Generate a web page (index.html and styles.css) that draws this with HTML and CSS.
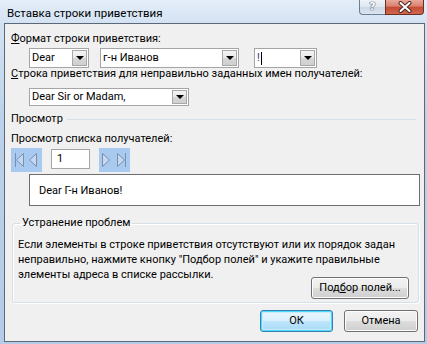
FILE: index.html
```html
<!DOCTYPE html>
<html lang="ru">
<head>
<meta charset="utf-8">
<link rel="stylesheet" href="styles.css">
</head>
<body>
<div class="window">
  <div class="titlebar">
    <span class="title">Вставка строки приветствия</span>
    <div class="caps">
      <div class="cap-help">?</div>
      <div class="cap-close">
        <svg width="16" height="12" viewBox="0 0 16 12"><path d="M3.5 2 L12.5 10 M12.5 2 L3.5 10" stroke="#4a2a24" stroke-width="4" stroke-linecap="round"/><path d="M3.5 2 L12.5 10 M12.5 2 L3.5 10" stroke="#fff" stroke-width="2" stroke-linecap="round"/></svg>
      </div>
    </div>
  </div>
  <div class="client">
    <div class="label lbl1"><u>Ф</u>ормат строки приветствия:</div>
    <div class="row row1">
      <div class="combo w-a"><span class="val">Dear</span><span class="drop"></span></div>
      <div class="combo w-b"><span class="val">г-н Иванов</span><span class="drop"></span></div>
      <div class="combo w-c"><span class="val">!<i class="caret"></i></span><span class="drop"></span></div>
    </div>
    <div class="label lbl2"><u>С</u>трока приветствия для неправильно заданных имен получателей:</div>
    <div class="row row2">
      <div class="combo w-d"><span class="val">Dear Sir or Madam,</span><span class="drop"></span></div>
    </div>
    <div class="section">
      <span class="section-title">Просмотр</span>
      <span class="section-line"></span>
    </div>
    <div class="label lbl3">Просмотр списка получателей:</div>
    <div class="nav">
      <div class="navbox">
        <svg width="31" height="24" viewBox="0 0 31 24"><path d="M4.5 5 V19" stroke="#7d8fa5" stroke-width="1"/><path d="M12.5 5.5 L5.5 12 L12.5 18.5 Z" fill="#c2d8f4" stroke="#7d8fa5" stroke-width="1"/><path d="M25.5 5.5 L18.5 12 L25.5 18.5 Z" fill="#c2d8f4" stroke="#7d8fa5" stroke-width="1"/></svg>
      </div>
      <div class="navinput">1</div>
      <div class="navbox">
        <svg width="31" height="24" viewBox="0 0 31 24"><path d="M3.5 5.5 L10.5 12 L3.5 18.5 Z" fill="#c2d8f4" stroke="#7d8fa5" stroke-width="1"/><path d="M18.5 5.5 L25.5 12 L18.5 18.5 Z" fill="#c2d8f4" stroke="#7d8fa5" stroke-width="1"/><path d="M26.5 5 V19" stroke="#7d8fa5" stroke-width="1"/></svg>
      </div>
    </div>
    <div class="preview">Dear Г-н Иванов!</div>
    <fieldset class="group">
      <legend>Устранение проблем</legend>
      <p class="help">Если элементы в строке приветствия отсутствуют или их порядок задан неправильно, нажмите кнопку "Подбор полей" и укажите правильные элементы адреса в списке рассылки.</p>
      <div class="group-actions">
        <button class="btn btn-match">Под<u>б</u>ор полей...</button>
      </div>
    </fieldset>
    <div class="footer">
      <button class="btn btn-ok">ОК</button>
      <button class="btn btn-cancel">Отмена</button>
    </div>
  </div>
</div>
</body>
</html>
```

FILE: styles.css
```css
* { box-sizing: border-box; }
html, body { margin: 0; padding: 0; }
body {
  width: 427px;
  height: 344px;
  overflow: hidden;
  font-family: Roboto, "Noto Sans", sans-serif;
  font-size: 11px;
  color: #000;
}
.window {
  width: 427px;
  height: 344px;
  display: flex;
  flex-direction: column;
  padding: 0 2px 2px 4px;
  background: linear-gradient(180deg, #e4eef9 0px, #d4e3f3 22px, #bcd2ea 120px, #b4cce8 100%);
}
.titlebar {
  height: 23px;
  flex: none;
  position: relative;
  display: flex;
  align-items: center;
}
.title {
  padding-left: 3px;
  font-size: 11.5px;
  color: #000;
  margin-top: 2px;
}
.caps {
  position: absolute;
  top: 0;
  right: 1px;
  display: flex;
}
.cap-help {
  width: 26px;
  height: 15px;
  border: 1px solid #6f7f93;
  border-top: none;
  border-right: none;
  border-radius: 0 0 0 4px;
  background: linear-gradient(180deg, #eef3f9 0, #dde6f0 50%, #ccd8e6 51%, #dbe5f0 100%);
  color: #fff;
  font-family: "DejaVu Sans", sans-serif;
  font-weight: bold;
  font-size: 11px;
  line-height: 14px;
  text-align: center;
  text-shadow: 0 0 1px #4b5a6b, 0 0 1px #4b5a6b, 0 0 1px #4b5a6b;
}
.cap-close {
  width: 39px;
  height: 15px;
  border: 1px solid #6a2e23;
  border-top: none;
  border-radius: 0 0 4px 0;
  background: linear-gradient(180deg, #e9a99b 0, #d9806c 45%, #c44a33 50%, #d2674d 100%);
  display: flex;
  align-items: center;
  justify-content: center;
}
.client {
  flex: 1;
  background: #f0f0f0;
  border: 1px solid #5c6878;
  display: flex;
  flex-direction: column;
  padding: 0 0 0 6px;
}
.label {
  line-height: 12px;
  white-space: nowrap;
  flex: none;
}
.lbl1 { margin-top: 9px; }
.row { display: flex; margin-left: 18px; flex: none; }
.row1 { margin-top: 3px; }
.lbl2 { margin-top: 0px; }
.row2 { margin-top: 8px; }
.combo {
  position: relative;
  height: 20px;
  background: #fff;
  border: 1px solid #a5a5a5;
  display: flex;
  align-items: center;
}
.w-a { width: 60px; }
.w-b { width: 139px; margin-left: 11px; }
.w-c { width: 63px; margin-left: 15px; }
.w-d { width: 160px; height: 18px; }
.val {
  padding-left: 2px;
  line-height: 16px;
  white-space: nowrap;
  display: flex;
  align-items: center;
}
.w-c .val { color: #4b2a8a; }
.caret {
  display: inline-block;
  width: 1px;
  height: 13px;
  background: #000;
  margin-left: 1px;
}
.drop {
  position: absolute;
  right: 1px;
  top: 1px;
  bottom: 1px;
  width: 15px;
  border: 1px solid #a8a8a8;
  background: linear-gradient(180deg, #f4f4f4 0, #e8e8e8 50%, #d6d6d6 51%, #cfcfcf 100%);
}
.drop::after {
  content: "";
  position: absolute;
  left: 3px;
  top: 50%;
  margin-top: -2px;
  border-left: 4px solid transparent;
  border-right: 4px solid transparent;
  border-top: 4px solid #000;
}
.section {
  display: flex;
  align-items: center;
  margin-top: 7px;
  line-height: 12px;
  flex: none;
}
.section-line {
  flex: 1;
  height: 1px;
  background: #d5dfe5;
  margin: 1px 8px 0 4px;
}
.lbl3 { margin-top: 8px; }
.nav {
  display: flex;
  align-items: flex-start;
  height: 24px;
  flex: none;
  margin-top: 3px;
}
.navbox {
  width: 31px;
  height: 24px;
  background: #a8c9f0;
}
.navbox svg { display: block; }
.navinput {
  width: 39px;
  height: 20px;
  margin: 1px 9px 0 9px;
  background: #fff;
  border: 1px solid #a5a5a5;
  padding-left: 5px;
  line-height: 18px;
}
.preview {
  margin: 2px 0 0 18px;
  width: 391px;
  height: 32px;
  flex: none;
  background: #fff;
  border: 1px solid #6d6d6d;
  padding: 1px 0 0 9px;
  line-height: 30px;
}
.group {
  margin: 11px 0 0 1px;
  width: 407px;
  height: 86px;
  flex: none;
  border: 1px solid #d5dfe5;
  border-radius: 3px;
  box-shadow: inset 1px 1px 0 #fff, 1px 1px 0 #fff;
  padding: 0 10px 0 5px;
  min-width: 0;
}
.group legend {
  padding: 0 2px;
  margin-left: 2px;
  line-height: 12px;
}
.help {
  margin: 8px 0 0 0;
  line-height: 15px;
}
.group-actions {
  display: flex;
  justify-content: flex-end;
  margin-top: -5px;
}
.btn {
  font-family: inherit;
  font-size: 11px;
  color: #000;
  height: 22px;
  border: 1px solid #707070;
  border-radius: 3px;
  background: linear-gradient(180deg, #f2f2f2 0, #ebebeb 50%, #dddddd 51%, #cfcfcf 100%);
  box-shadow: inset 0 0 0 1px #fcfcfc;
  padding: 0;
  line-height: 18px;
}
.btn-match { width: 98px; margin-right: -1px; }
.footer {
  display: flex;
  justify-content: flex-end;
  margin-top: 7px;
  padding-right: 6px;
  gap: 11px;
  flex: none;
}
.btn-ok {
  width: 73px;
  border-color: #3c7fb1;
  box-shadow: inset 0 0 0 1px #48d9fd, inset 0 0 0 2px #c7ecfb;
  background: linear-gradient(180deg, #eaf6fd 0, #d9f0fc 50%, #bee6fd 51%, #a7d9f5 100%);
}
.btn-cancel { width: 74px; }
```
